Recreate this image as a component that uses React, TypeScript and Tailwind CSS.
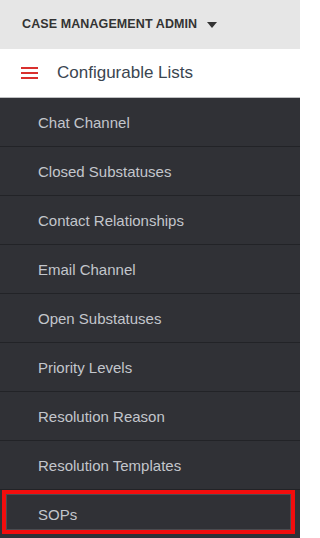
const items = [
  "Chat Channel",
  "Closed Substatuses",
  "Contact Relationships",
  "Email Channel",
  "Open Substatuses",
  "Priority Levels",
  "Resolution Reason",
  "Resolution Templates",
  "SOPs",
];

export default function App() {
  return (
    <div className="w-[300px] h-[538px] overflow-hidden bg-[#303136] font-['Liberation_Sans',Arial,sans-serif]">
      {/* Top band */}
      <div className="h-[49px] bg-[#e6e6e6] flex items-center pl-[22px]">
        <span className="text-[12.5px] font-bold text-[#333] tracking-[0.1px]">
          CASE MANAGEMENT ADMIN
        </span>
        <svg width="10" height="6" viewBox="0 0 10 6" className="ml-[10px]">
          <path d="M0 0 L10 0 L5 6 Z" fill="#333" />
        </svg>
      </div>

      {/* Title bar */}
      <div className="h-[49px] bg-white flex items-center pl-[21px] border-b border-[#bfc0c2]">
        <div className="flex flex-col gap-[3px] w-[17px]">
          <div className="h-[2px] bg-[#d9302e]" />
          <div className="h-[2px] bg-[#d9302e]" />
          <div className="h-[2px] bg-[#d9302e]" />
        </div>
        <span className="ml-[19px] text-[17px] text-[#3b4550]">Configurable Lists</span>
      </div>

      {/* List */}
      <ul>
        {items.map((label, i) => (
          <li
            key={label}
            className="relative h-[49px] flex items-center pl-[38px] pt-[2px] border-b border-[#222327] text-[15px] text-[#c3c6cc]"
          >
            {label}
            {i === items.length - 1 && (
              <div className="absolute left-[2px] top-0 w-[293px] h-[44px] border-[4px] border-[#f20d0d]">
                <div className="w-full h-full border border-[#4a4b50]" />
              </div>
            )}
          </li>
        ))}
      </ul>
    </div>
  );
}
